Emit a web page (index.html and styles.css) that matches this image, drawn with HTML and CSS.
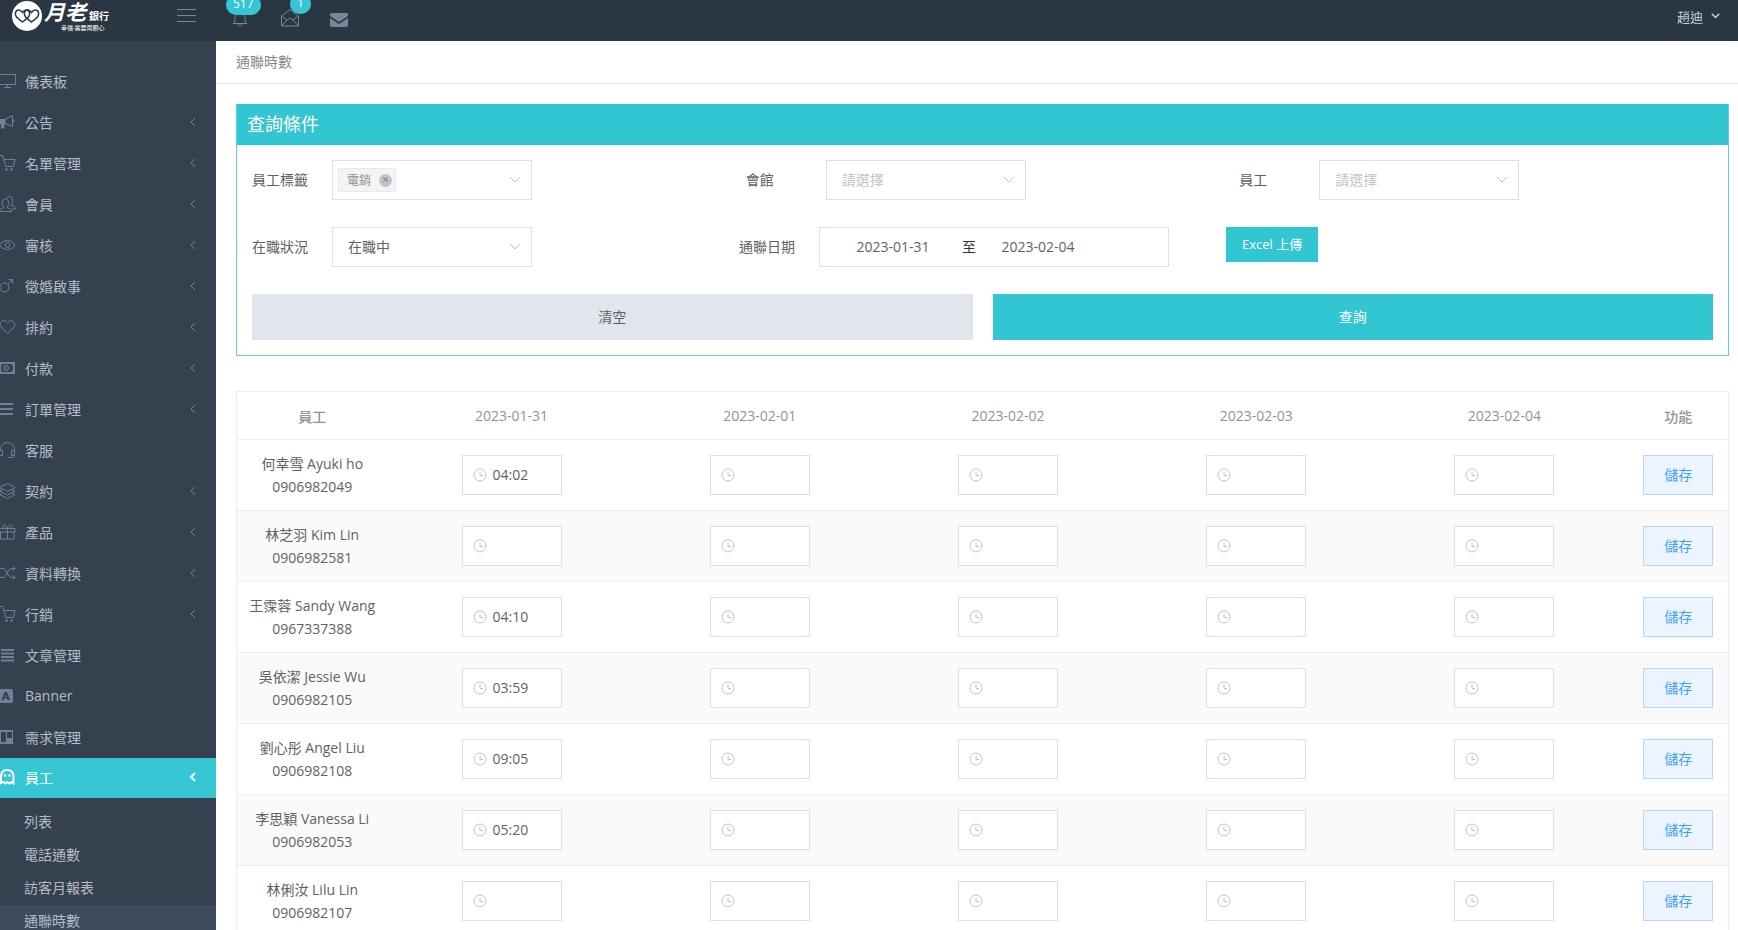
FILE: index.html
```html
<!DOCTYPE html>
<html lang="zh-Hant">
<head>
  <meta charset="UTF-8" />
  <title>通聯時數</title>
  <link rel="stylesheet" href="styles.css">
</head>
<body>
  <!-- icon set -->
  <svg class="sprite" xmlns="http://www.w3.org/2000/svg">
    <symbol id="i-screen" viewBox="0 0 16 16"><path d="M-.5 1.5h16v10h-16zM4 14.5h7M7.5 12v2"/></symbol>
    <symbol id="i-horn" viewBox="0 0 16 16"><path d="M5 5.5L12.500 1.500v11L5 9.500M14 5.500v3"/><path class="fill" d="M0 5h5.500v5H4.500v4.500H1V10H0z"/></symbol>
    <symbol id="i-cart" viewBox="0 0 16 16"><path d="M0 .5h2.500L6 11.500h7.500L15 4.500H4"/><circle class="fill" cx="6.500" cy="14.500" r="1.200"/><circle class="fill" cx="11.500" cy="14.500" r="1.200"/></symbol>
    <symbol id="i-users" viewBox="0 0 16 16"><path d="M-.5 15.500c0-2.500 1-2.800 4-3.500v-1.500C1.500 9 1.500 3 5.500 3s4 6 2 7.500V12c3 .7 4 1 4 3.500zM6.500 1.500C9-.5 13.500.5 12.500 6c-.2 1-.6 1.500-1.200 2v1.500c3 .7 4 1 4 3.500h-3"/></symbol>
    <symbol id="i-eye" viewBox="0 0 16 16"><path d="M-.5 8C3 2 12 2 15 8c-3 6-12 6-15.500 0z"/><circle cx="7.500" cy="8" r="2.500"/></symbol>
    <symbol id="i-male" viewBox="0 0 16 16"><circle cx="4.500" cy="9.500" r="4.500"/><path d="M8 6l4.500-4.500M8.500 1.500h4v4"/></symbol>
    <symbol id="i-heart" viewBox="0 0 16 16"><path d="M7.500 14.500L1 8C-2 3.500 4-1 7.500 3.500 11-1 17 3.500 14 8z"/></symbol>
    <symbol id="i-cash" viewBox="0 0 16 16"><path class="wide" d="M0 3h14v10H0z"/><circle cx="6" cy="8" r="2.500"/><path d="M6 6.500v3M1 5.500l2-2M1 10.500l2 2M13 5.500l-2-2M13 10.500l-2 2"/></symbol>
    <symbol id="i-bars" viewBox="0 0 16 16"><path class="wide" d="M0 3h13M0 8h13M0 13h13"/></symbol>
    <symbol id="i-headset" viewBox="0 0 16 16"><path d="M.5 9V7.500a7 7 0 0 1 14 0V9M-.5 8.500h3v5h-3zM11.500 8.500h3v5h-3zM14.500 13c0 2-1.500 2.500-4 2.500H8"/></symbol>
    <symbol id="i-layers" viewBox="0 0 16 16"><path d="M7.500.5l7.500 4-7.500 4-8-4zM2 7l-2.500 1 8 4L15 8l-2.500-1M2 10.500l-2.500 1 8 4 7.500-4-2.500-1"/></symbol>
    <symbol id="i-gift" viewBox="0 0 16 16"><path d="M-.5 4.500h15.500v3.500H-.5zM.5 8v7h13.500V8M7.500 4.500v10.500M7.500 4.500C4 4.500 2 3 3 1.500S6.500 1 7.500 4.500C8.500 1 11 0 12 1.500s-1 3-4.500 3"/></symbol>
    <symbol id="i-random" viewBox="0 0 16 16"><path d="M-.5 3.500H3c4 0 4 9 9 9h3M-.5 12.500H3c4 0 4-9 9-9h3M12.500 1l2.500 2.500L12.500 6M12.500 10l2.500 2.500-2.500 2.500"/></symbol>
    <symbol id="i-list" viewBox="0 0 16 16"><path class="wide" d="M1 3h13M1 6.500h13M1 10h13M1 13.500h13"/></symbol>
    <symbol id="i-font" viewBox="0 0 16 16"><path class="fill" fill-rule="evenodd" d="M0 1h11q2 0 2 2v10q0 2-2 2H0zM4.500 4L1.500 12h2.200l.5-1.500h3l.5 1.500H10L7 4zM5.700 6.200l1 2.800H4.800z"/></symbol>
    <symbol id="i-board" viewBox="0 0 16 16"><path class="fill" fill-rule="evenodd" d="M0 1h13v14H0zM1 3v10h5V3zM7 3v6h5V3z"/></symbol>
    <symbol id="i-ghost" viewBox="0 0 16 16"><path class="wide" d="M1 14V7.500C1 3 3.500 1 7 1s6.500 2 6.500 6.500V14.500l-2-1.500-2 1.500-2-1.500-2 1.500-2-1.500z"/><circle class="fill" cx="5" cy="6.500" r="1.300"/><circle class="fill" cx="9.500" cy="6.500" r="1.300"/></symbol>
    <symbol id="i-left" viewBox="0 0 8 10"><path d="M6 1L2 5l4 4"/></symbol>
    <symbol id="i-down" viewBox="0 0 12 8"><path d="M1 1l5 5 5-5"/></symbol>
    <symbol id="i-clock" viewBox="0 0 14 14"><circle cx="7" cy="7" r="6"/><path d="M7 3.500V7.500h3"/></symbol>
    <symbol id="i-bell" viewBox="0 0 16 18"><path d="M1 14.500c2.500-1.500 2-4 2-6C3 5 5 3 8 3s5 2 5 5.500c0 2-.5 4.500 2 6zM6 15c0 3 4 3 4 0"/></symbol>
    <symbol id="i-mailopen" viewBox="0 0 18 18"><path d="M.5 7L9 .5 17.500 7v10H.5zM.5 7L6 11l3-2 3 2 5.500-4M.5 17L6 11M17.500 17L12 11"/></symbol>
    <symbol id="i-mail" viewBox="0 0 18 14"><path class="fill" d="M1.500 0h15Q18 0 18 1.500V3L9 9 0 3V1.500Q0 0 1.500 0zM0 5l9 6 9-6v7q0 2-2 2H2q-2 0-2-2z"/></symbol>
  </svg>

  <header class="topbar">
    <a href="#" class="logo">
      <svg width="110" height="36" viewBox="0 0 110 36">
        <circle cx="17" cy="16" r="15" fill="#fff"/>
        <g fill="none" stroke="#2b3643" stroke-width="1.500">
          <path d="M12.500 22C7 18 4.500 16 5.500 12.500s5-3 7 0c2-3 6-3.500 7 0S18 18 12.500 22z"/>
          <path d="M21.500 22C16 18 13.500 16 14.500 12.500s5-3 7 0c2-3 6-3.500 7 0S27 18 21.500 22z"/>
        </g>
        <text x="34" y="20" class="logo-main">月老</text>
        <text x="79" y="20" class="logo-sub">銀行</text>
        <text x="51" y="30" class="logo-tag">幸福·需要兩顆心</text>
      </svg>
    </a>
    <button class="toggler" aria-label="選單"></button>
    <nav class="notices">
      <a href="#"><svg class="icon" width="16" height="18"><use href="#i-bell"/></svg><span class="badge">517</span></a>
      <a href="#"><svg class="icon" width="18" height="18"><use href="#i-mailopen"/></svg><span class="badge">1</span></a>
      <a href="#"><svg class="icon" width="18" height="14"><use href="#i-mail"/></svg></a>
    </nav>
    <a href="#" class="user">趙迪 <svg class="icon" width="9" height="6"><use href="#i-down"/></svg></a>
  </header>

  <div class="page">
    <aside class="sidebar">
      <ul class="menu" id="menu"></ul>
      <ul class="submenu">
        <li><a href="#">列表</a></li>
        <li><a href="#">電話通數</a></li>
        <li><a href="#">訪客月報表</a></li>
        <li><a href="#" class="current">通聯時數</a></li>
      </ul>
    </aside>

    <main class="main">
      <div class="breadcrumb">通聯時數</div>

      <section class="panel">
        <h2>查詢條件</h2>
        <form class="panel-body" onsubmit="return false">
          <div class="row row-gap">
            <div class="field">
              <label for="tag">員工標籤</label>
              <div class="select">
                <select id="tag"><option></option></select>
                <svg class="icon" width="12" height="8"><use href="#i-down"/></svg>
                <span class="tag">電銷 <button type="button" aria-label="移除">×</button></span>
              </div>
            </div>
            <div class="field">
              <label for="hall">會館</label>
              <div class="select">
                <select id="hall" class="empty"><option>請選擇</option></select>
                <svg class="icon" width="12" height="8"><use href="#i-down"/></svg>
              </div>
            </div>
            <div class="field">
              <label for="staff">員工</label>
              <div class="select">
                <select id="staff" class="empty"><option>請選擇</option></select>
                <svg class="icon" width="12" height="8"><use href="#i-down"/></svg>
              </div>
            </div>
          </div>
          <div class="row">
            <div class="field">
              <label for="state">在職狀況</label>
              <div class="select">
                <select id="state"><option>在職中</option></select>
                <svg class="icon" width="12" height="8"><use href="#i-down"/></svg>
              </div>
            </div>
            <div class="field">
              <label for="from">通聯日期</label>
              <div class="range">
                <input id="from" type="text" value="2023-01-31">
                <span>至</span>
                <input type="text" value="2023-02-04" aria-label="結束日期">
              </div>
            </div>
            <div class="field">
              <button type="button" class="btn-excel">Excel 上傳</button>
            </div>
          </div>
          <div class="row row-gap">
            <button type="reset" class="btn-wide">清空</button>
            <button type="submit" class="btn-wide btn-primary">查詢</button>
          </div>
        </form>
      </section>

      <table class="hours">
        <colgroup><col class="col-name"><col><col><col><col><col><col class="col-act"></colgroup>
        <thead>
          <tr>
            <th>員工</th>
            <th>2023-01-31</th>
            <th>2023-02-01</th>
            <th>2023-02-02</th>
            <th>2023-02-03</th>
            <th>2023-02-04</th>
            <th>功能</th>
          </tr>
        </thead>
        <tbody id="rows"></tbody>
      </table>
    </main>
  </div>

  <script>
    const menu = [
      ["screen", "儀表板", false],
      ["horn", "公告", true],
      ["cart", "名單管理", true],
      ["users", "會員", true],
      ["eye", "審核", true],
      ["male", "徵婚啟事", true],
      ["heart", "排約", true],
      ["cash", "付款", true],
      ["bars", "訂單管理", true],
      ["headset", "客服", false],
      ["layers", "契約", true],
      ["gift", "產品", true],
      ["random", "資料轉換", true],
      ["cart", "行銷", true],
      ["list", "文章管理", false],
      ["font", "Banner", false],
      ["board", "需求管理", false],
      ["ghost", "員工", true]
    ];

    const staff = [
      ["何幸雪 Ayuki ho", "0906982049", "04:02"],
      ["林芝羽 Kim Lin", "0906982581", ""],
      ["王霂蓉 Sandy Wang", "0967337388", "04:10"],
      ["吳依潔 Jessie Wu", "0906982105", "03:59"],
      ["劉心彤 Angel Liu", "0906982108", "09:05"],
      ["李思穎 Vanessa Li", "0906982053", "05:20"],
      ["林俐汝 Lilu Lin", "0906982107", ""]
    ];

    document.getElementById("menu").innerHTML = menu.map(([icon, name, sub]) => `
      <li><a href="#" class="${icon === "ghost" ? "active" : ""}">
        <svg class="icon" width="16" height="16"><use href="#i-${icon}"/></svg>
        <span>${name}</span>
        ${sub ? '<svg class="icon arrow" width="8" height="10"><use href="#i-left"/></svg>' : ""}
      </a></li>`).join("");

    function timeCell(value, label) {
      return `<td><div class="time">
        <svg class="icon" width="14" height="14"><use href="#i-clock"/></svg>
        <input type="text" value="${value}" aria-label="${label}">
      </div></td>`;
    }

    document.getElementById("rows").innerHTML = staff.map(([name, phone, first]) => `
      <tr>
        <td>${name}<br>${phone}</td>
        ${[first, "", "", "", ""].map((v, i) => timeCell(v, name + " " + (i + 1))).join("")}
        <td><button class="btn-save">儲存</button></td>
      </tr>`).join("");
  </script>
</body>
</html>
```
FILE: styles.css
```css
* { box-sizing: border-box; }
body {
  margin: 0;
  height: 100vh;
  display: flex;
  flex-direction: column;
  overflow: hidden;
  font-family: "Open Sans", "Noto Sans CJK TC", sans-serif;
  font-size: 14px;
  color: #606266;
  background: #fff;
}
a { color: inherit; text-decoration: none; }
ul { list-style: none; margin: 0; padding: 0; }
button, input, select { font: inherit; color: inherit; border-radius: 0; }
button { cursor: pointer; border: none; padding: 0 0 2px; }
.sprite { display: none; }
.icon { fill: none; stroke: currentColor; stroke-width: 1; flex: none; overflow: hidden; }
.fill { fill: currentColor; stroke: none; }
.wide { stroke-width: 2; }

/* top bar */
.topbar {
  height: 41px;
  flex: none;
  display: flex;
  background: #2b3643;
  color: #79869a;
}
.logo { width: 177px; padding-left: 10px; }
.logo svg { display: block; }
.logo text { fill: #fff; }
.logo-main { font-size: 21px; font-weight: bold; font-style: italic; }
.logo-sub { font-size: 10px; font-weight: bold; }
.logo-tag { font-size: 6px; }
.toggler {
  width: 19px;
  height: 13px;
  margin-top: 9px;
  padding: 0;
  background: none;
  border-top: 1px solid #79869a;
  border-bottom: 1px solid #79869a;
  display: flex;
  align-items: center;
}
.toggler::before { content: ""; width: 100%; height: 1px; background: #79869a; }
.notices { display: flex; gap: 32px; margin-left: 36px; }
.notices a { position: relative; width: 17px; height: 27px; display: flex; align-items: flex-end; }
.badge {
  position: absolute;
  left: 9px;
  bottom: 13px;
  height: 20px;
  min-width: 20px;
  padding: 0 7px;
  border-radius: 10px;
  background: #36c6d3;
  color: #fff;
  font-size: 12px;
  line-height: 17px;
  text-align: center;
}
.notices a:first-child .badge { left: -6px; bottom: 12px; }
.user {
  margin-left: auto;
  padding: 0 18px;
  height: 32px;
  display: flex;
  align-items: center;
  gap: 8px;
  font-size: 13px;
  color: #c6cfda;
}
.user .icon { stroke-width: 2; }

/* sidebar */
.page { flex: 1; min-height: 0; display: flex; }
.sidebar { width: 216px; flex: none; padding-top: 20px; background: #364150; overflow: hidden; }
.menu a {
  height: 41px;
  padding: 0 19px 2px 0;
  display: flex;
  align-items: center;
  gap: 9px;
  color: #b4bcc8;
}
.menu .icon { color: #708096; }
.menu .arrow { margin-left: auto; }
.menu .active { height: 40px; background: #36c6d3; color: #fff; }
.menu .active .icon { color: #fff; }
.menu .active .arrow { stroke-width: 2; }
.submenu { padding-top: 8px; }
.submenu a { height: 33px; padding: 0 0 4px 24px; display: flex; align-items: center; color: #b4bcc8; }
.submenu .current { background: #3e4b5c; }

/* content */
.main { flex: 1; min-width: 0; overflow: hidden; }
.breadcrumb {
  height: 43px;
  padding-left: 20px;
  line-height: 42px;
  color: #888;
  border-bottom: 1px solid #e7ecf1;
}
.panel { margin: 20px 9px 35px 20px; border: 1px solid #5cd1db; border-top: none; }
.panel h2 {
  margin: 0;
  padding-left: 10px;
  background: #32c5d2;
  color: #fff;
  font-size: 18px;
  font-weight: normal;
  line-height: 41px;
}
.panel-body { padding: 15px; display: flex; flex-direction: column; gap: 27px; }
.row { display: flex; }
.row-gap { gap: 20px; }
.field { flex: 1; min-width: 0; display: flex; align-items: flex-start; }
.field label { width: 80px; line-height: 40px; }
.select { position: relative; width: 200px; }
.select select {
  appearance: none;
  display: block;
  width: 100%;
  height: 40px;
  padding: 0 15px 2px;
  background: #fff;
  border: 1px solid #dcdfe6;
}
.select select.empty { color: #c0c4cc; }
.select .icon { position: absolute; right: 11px; top: 16px; color: #c0c4cc; }
.tag {
  position: absolute;
  left: 6px;
  top: 8px;
  height: 24px;
  padding: 0 3px 0 8px;
  display: flex;
  align-items: center;
  gap: 8px;
  font-size: 12px;
  color: #909399;
  background: #f4f4f5;
  border: 1px solid #e9e9eb;
}
.tag button {
  width: 13px;
  height: 13px;
  padding: 0;
  border-radius: 50%;
  background: #c0c4cc;
  color: #777b83;
  line-height: 12px;
}
.range {
  width: 350px;
  height: 40px;
  padding: 0 0 2px 8px;
  display: flex;
  align-items: center;
  border: 1px solid #dcdfe6;
}
.range input { width: 130px; padding: 0; border: none; background: none; text-align: center; }
.range span { width: 15px; padding-left: 4px; color: #303133; }
.btn-excel { height: 35px; padding: 0 16px 2px; background: #32c5d2; color: #fff; font-size: 13px; }
.btn-wide { flex: 1; height: 46px; background: #e1e5ec; }
.btn-primary { background: #32c5d2; color: #fff; }

/* hours table */
.hours {
  width: calc(100% - 29px);
  margin-left: 20px;
  table-layout: fixed;
  border-collapse: collapse;
  border: 1px solid #ebeef5;
}
.col-name { width: 151px; }
.col-act { width: 100px; }
.hours th { height: 48px; padding: 0; font-weight: 500; color: #909399; }
.hours td { height: 71px; padding: 0; text-align: center; line-height: 23px; }
.hours tr { border-bottom: 1px solid #ebeef5; }
.hours tbody tr:nth-child(even) { background: #fafafa; }
.time {
  width: 100px;
  height: 40px;
  margin: 0 auto;
  padding: 0 0 1px 10px;
  display: flex;
  align-items: center;
  gap: 6px;
  background: #fff;
  border: 1px solid #dcdfe6;
}
.time .icon { color: #c0c4cc; }
.time input { flex: 1; min-width: 0; padding: 0; border: none; background: none; }
.btn-save {
  width: 70px;
  height: 40px;
  background: #ecf5ff;
  border: 1px solid #b3d8ff;
  color: #409eff;
}
```
